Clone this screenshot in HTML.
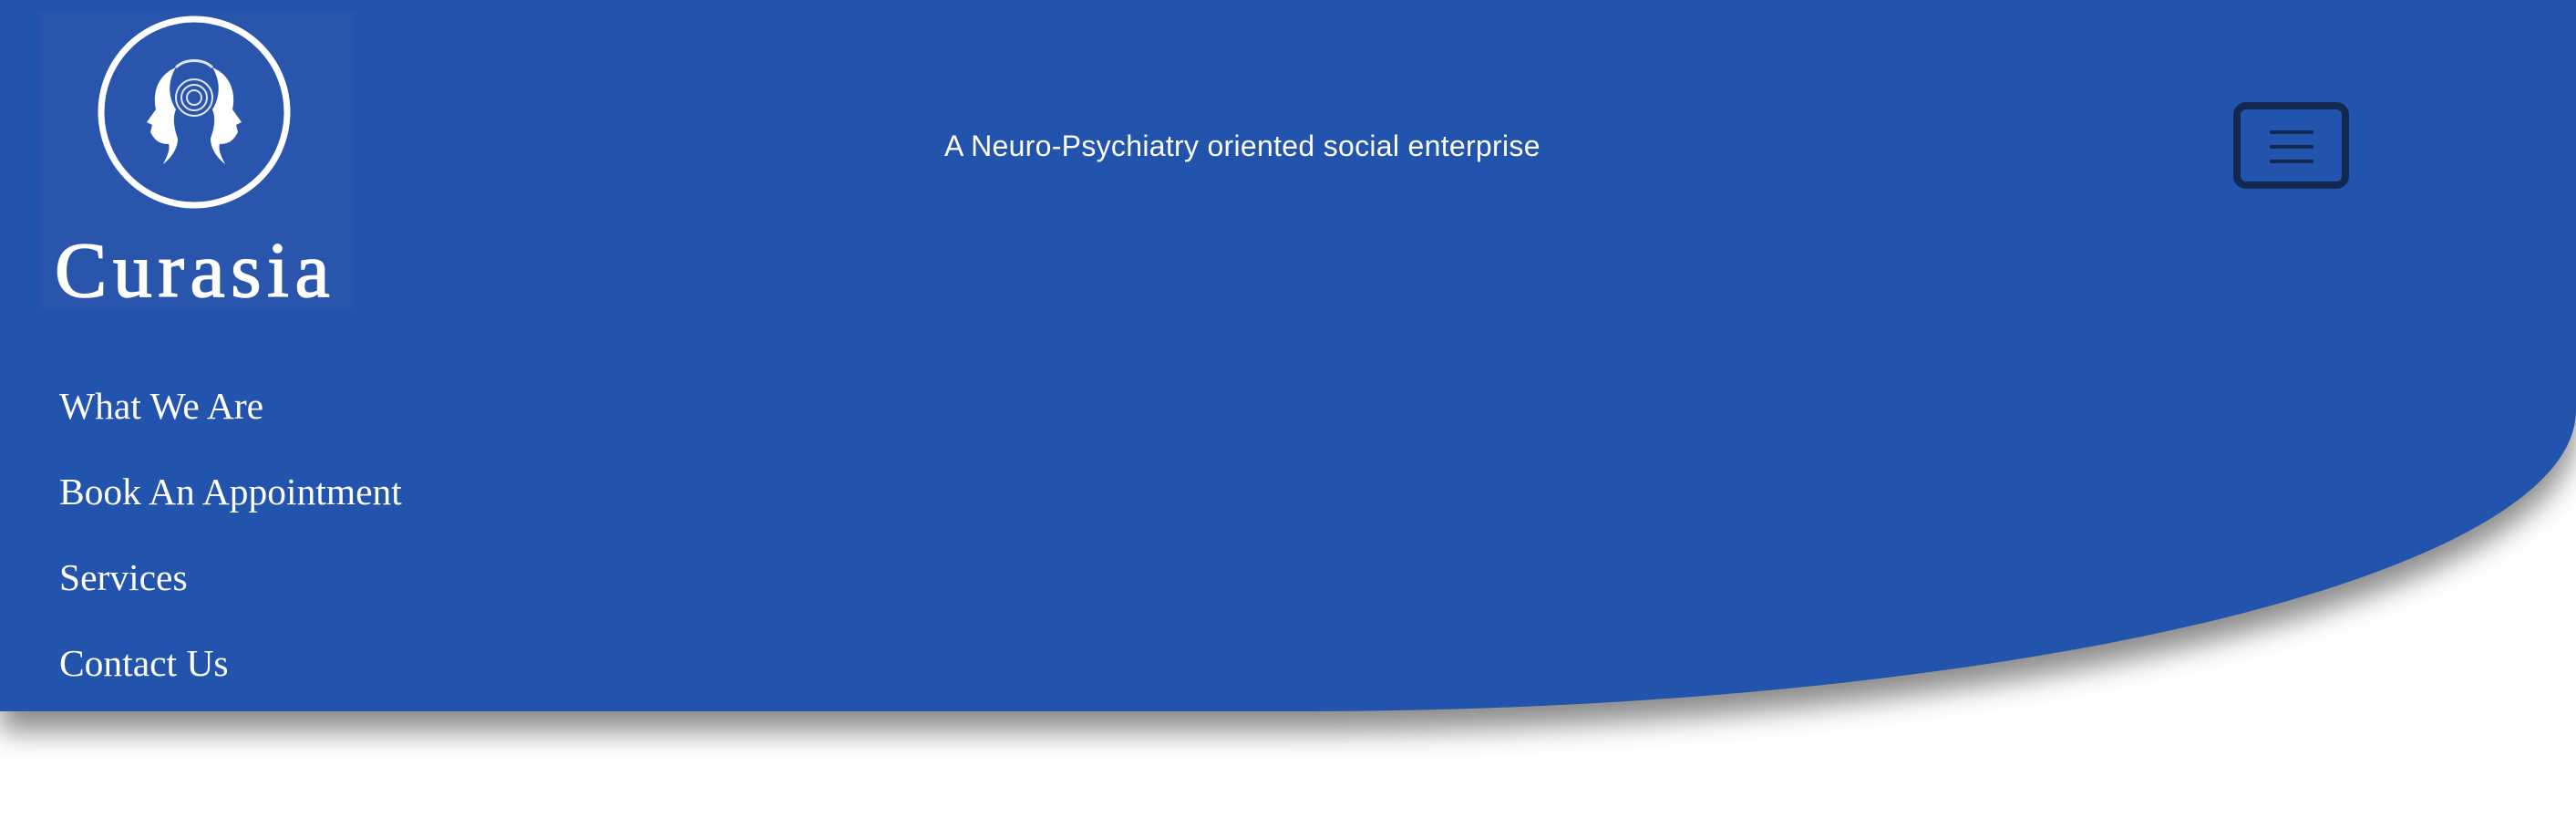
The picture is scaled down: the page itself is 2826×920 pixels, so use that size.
<!DOCTYPE html>
<html><head><meta charset="utf-8"><style>
html,body{margin:0;padding:0;width:2826px;height:920px;background:#fff;overflow:hidden}
.hdr{position:absolute;left:0;top:0;width:2826px;height:780px;background:#2253ad;border-bottom-right-radius:1400px 330px;box-shadow:0 22px 30px rgba(0,0,0,0.45)}
.logo{position:absolute;left:43px;top:12px;width:346px;height:326px;background:#2a55ad}
.tag{position:absolute;left:1036px;top:142px;font:32px "Liberation Sans",sans-serif;letter-spacing:0.3px;color:#fff;white-space:nowrap}
.burger{position:absolute;left:2450px;top:112px;width:111px;height:79px;border:8px solid #13284f;border-radius:14px}
.burger i{position:absolute;left:32px;width:48px;height:4px;border-radius:2px;background:#13284f}
.nav{position:absolute;left:65px;font:41.5px "Liberation Serif",serif;color:#fff;white-space:nowrap}
</style></head><body>
<div class="hdr">
<div class="logo">
<svg width="346" height="326" viewBox="0 0 346 326">
<circle cx="170" cy="111" r="102" fill="none" stroke="#fff" stroke-width="7"/>
<g fill="#fff">
<path d="M150 62 C130 70 124 90 128 108 L118 122 L124 125 L122 133 C126 140 130 146 142 146 C144 152 140 160 136 168 C146 160 152 150 152 140 C148 128 146 118 150 108 C142 96 140 78 150 62Z"/>
<path d="M190 62 C210 70 216 90 212 108 L222 122 L216 125 L218 133 C214 140 210 146 198 146 C196 152 200 160 204 168 C194 160 188 150 188 140 C192 128 194 118 190 108 C198 96 200 78 190 62Z"/>
</g>
<g fill="none" stroke="#fff" stroke-width="2" opacity="0.85">
<circle cx="170" cy="95" r="20"/><circle cx="170" cy="95" r="14"/><circle cx="170" cy="95" r="8"/>
<path d="M150 62 C160 52 180 52 190 62" stroke-width="3"/>
</g>
<text x="17" y="313" font-family="Liberation Serif,serif" font-size="86" letter-spacing="6.5" fill="#fff" stroke="#fff" stroke-width="1.5">Curasia</text>
</svg>
</div>
<div class="tag">A Neuro-Psychiatry oriented social enterprise</div>
<div class="burger"><i style="top:23px"></i><i style="top:39px"></i><i style="top:55px"></i></div>
<div class="nav" style="top:421px">What We Are</div>
<div class="nav" style="top:515px">Book An Appointment</div>
<div class="nav" style="top:609px">Services</div>
<div class="nav" style="top:703px">Contact Us</div>
</div>
</body></html>
